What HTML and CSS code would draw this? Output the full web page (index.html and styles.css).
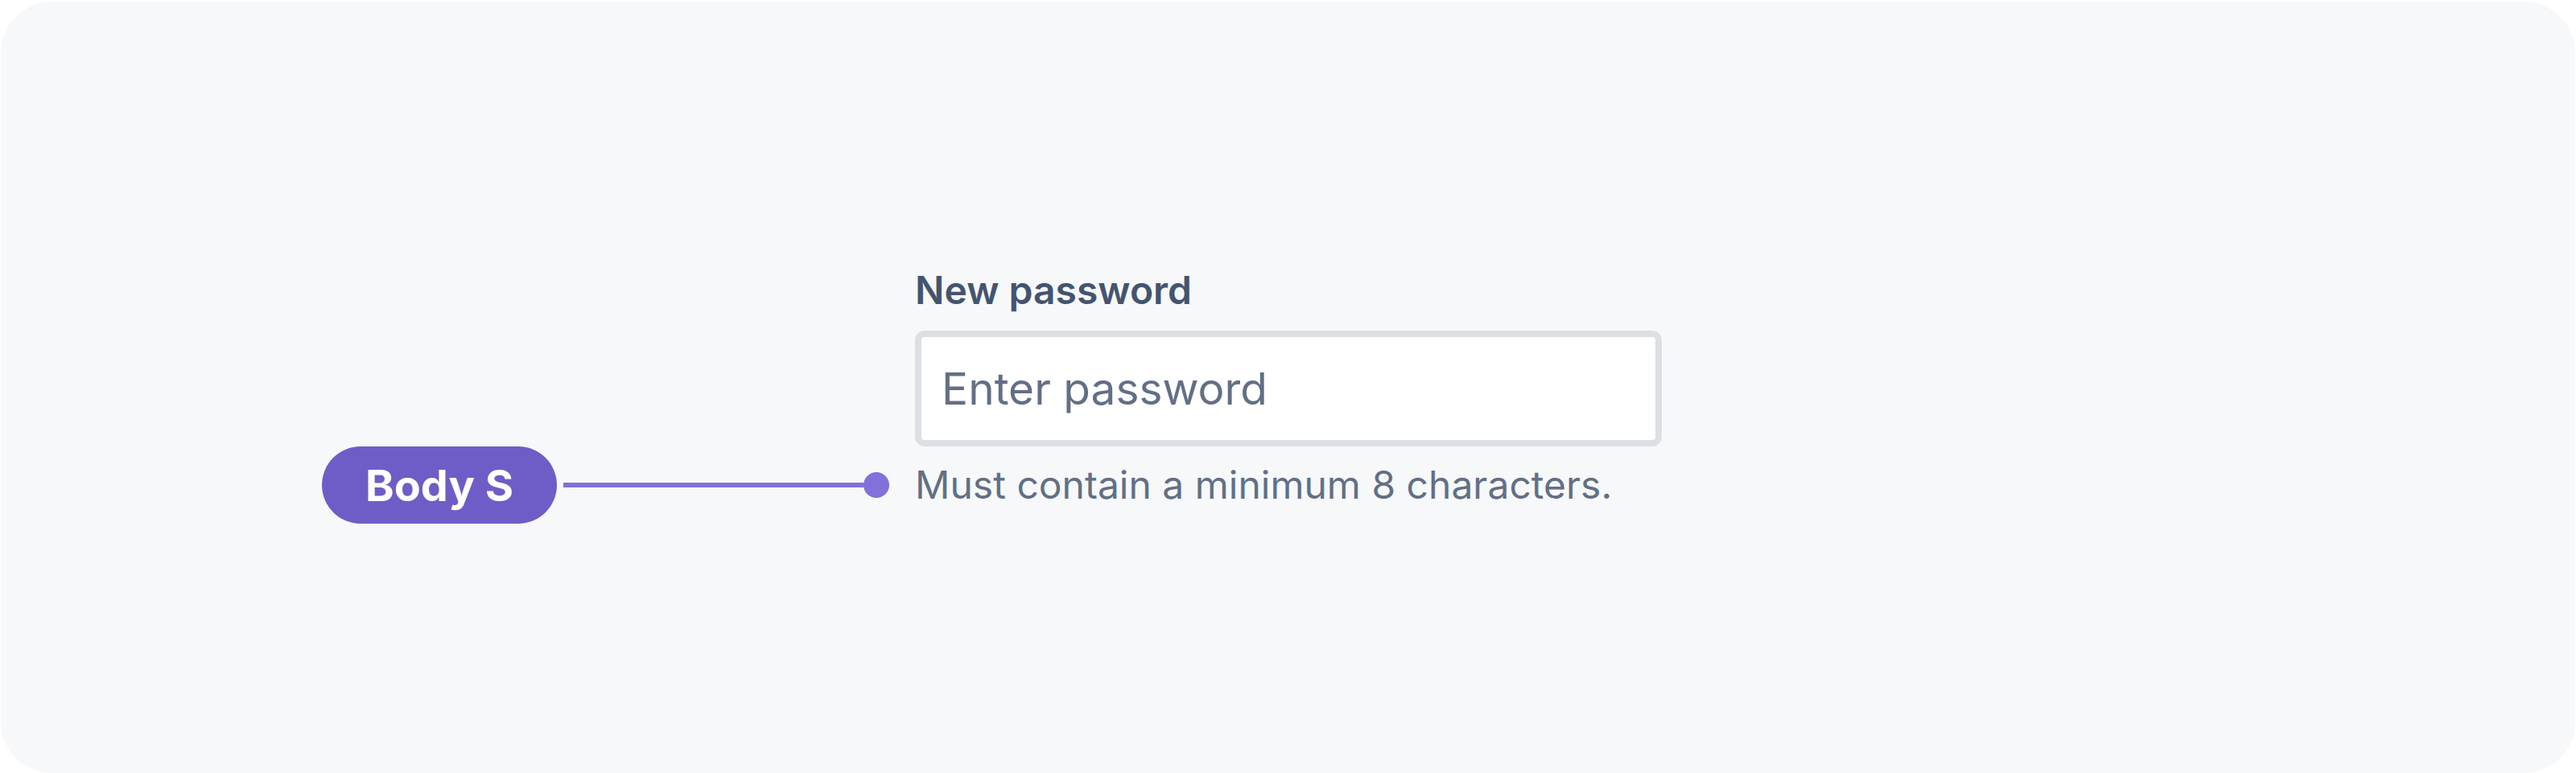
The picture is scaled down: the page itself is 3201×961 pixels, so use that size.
FILE: index.html
```html
<!DOCTYPE html>
<html lang="en">
<head>
<meta charset="utf-8">
<title>Field helper text annotation</title>
<link rel="stylesheet" href="styles.css">
</head>
<body>
<div class="card">
  <div class="field-grid">
    <label class="field-label">New password</label>
    <div class="field-input"><span class="placeholder">Enter password</span></div>
    <div class="annotation">
      <span class="badge">Body S</span>
      <span class="connector"></span>
      <span class="dot"></span>
    </div>
    <p class="helper">Must contain a minimum 8 characters.</p>
  </div>
</div>
</body>
</html>
```
FILE: styles.css
```css
html, body {
  margin: 0;
  padding: 0;
  background: #ffffff;
}

body {
  font-family: Inter, "Noto Sans", "Liberation Sans", sans-serif;
}

.card {
  box-sizing: border-box;
  width: 3199px;
  height: 959px;
  margin: 2px 0 0 1px;
  background: #f7f8f9;
  border-radius: 64px;
  display: flex;
  align-items: flex-start;
  padding: 327px 0 0 399px;
}

.field-grid {
  display: grid;
  grid-template-columns: auto 928px;
  column-gap: 32px;
  align-items: center;
}

.field-label {
  grid-column: 2;
  grid-row: 1;
  font-size: 48px;
  line-height: 64px;
  font-weight: 600;
  color: #44546f;
  margin-bottom: 18px;
}

.field-input {
  grid-column: 2;
  grid-row: 2;
  box-sizing: border-box;
  height: 144px;
  border: 8px solid #dcdfe4;
  border-radius: 12px;
  background: #ffffff;
  display: flex;
  align-items: center;
  padding: 0 25px;
}

.placeholder {
  font-size: 55px;
  line-height: 80px;
  color: #626f86;
}

.annotation {
  grid-column: 1;
  grid-row: 3;
  display: flex;
  align-items: center;
}

.badge {
  height: 96px;
  box-sizing: border-box;
  padding: 0 54px;
  border-radius: 48px;
  background: #6e5dc6;
  color: #ffffff;
  font-size: 54px;
  font-weight: 700;
  display: flex;
  align-items: center;
}

.connector {
  width: 373px;
  height: 6px;
  margin-left: 8px;
  background: #8270db;
}

.dot {
  width: 32px;
  height: 32px;
  border-radius: 50%;
  background: #8270db;
}

.helper {
  grid-column: 2;
  grid-row: 3;
  margin: 0;
  font-size: 48px;
  line-height: 64px;
  color: #626f86;
}
```
